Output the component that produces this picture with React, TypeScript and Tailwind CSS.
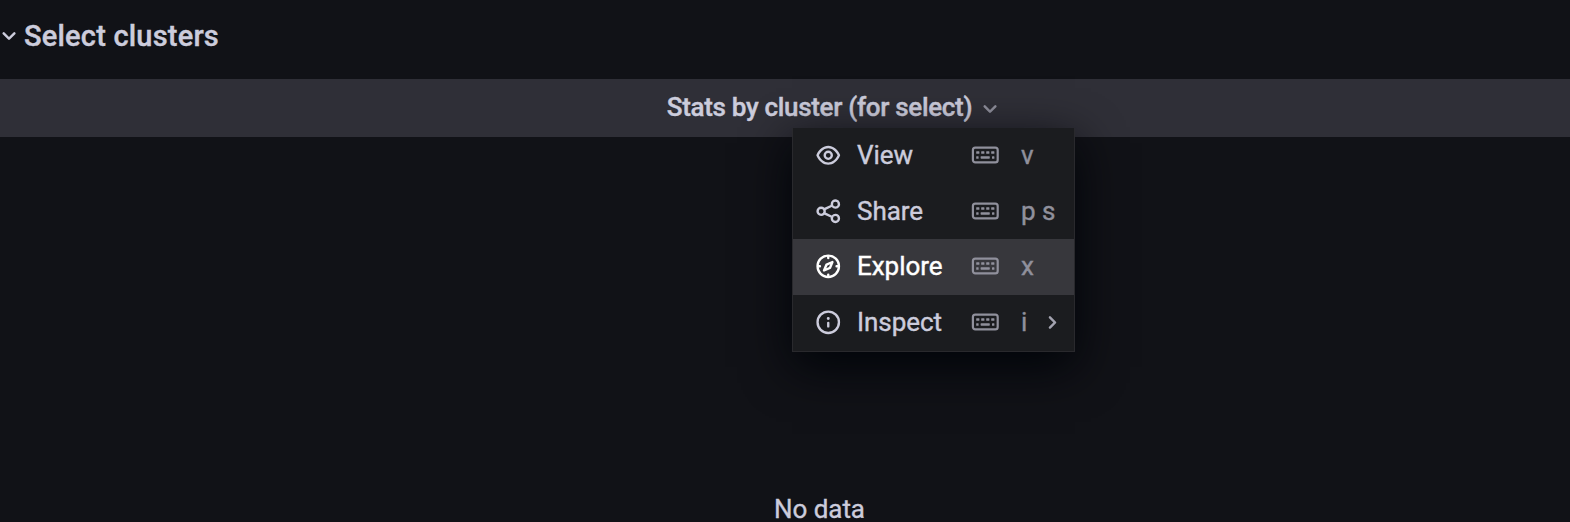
import React from 'react';

const PATHS = {
  angleDown:
    'M17,9.17a1,1,0,0,0-1.41,0L12,12.71,8.46,9.17a1,1,0,0,0-1.41,0,1,1,0,0,0,0,1.42l4.24,4.24a1,1,0,0,0,1.42,0L17,10.59A1,1,0,0,0,17,9.17Z',
  angleRight:
    'M14.83,11.29,10.59,7.05a1,1,0,0,0-1.42,0,1,1,0,0,0,0,1.41L12.71,12,9.17,15.54a1,1,0,0,0,0,1.41,1,1,0,0,0,.71.29,1,1,0,0,0,.71-.29l4.24-4.24A1,1,0,0,0,14.83,11.29Z',
  eye: 'M21.92,11.6C19.9,6.91,16.1,4,12,4S4.1,6.91,2.08,11.6a1,1,0,0,0,0,.8C4.1,17.09,7.9,20,12,20s7.9-2.91,9.92-7.6A1,1,0,0,0,21.92,11.6ZM12,18c-3.17,0-6.17-2.29-7.9-6C5.83,8.29,8.83,6,12,6s6.17,2.29,7.9,6C18.17,15.71,15.17,18,12,18ZM12,8a4,4,0,1,0,4,4A4,4,0,0,0,12,8Zm0,6a2,2,0,1,1,2-2A2,2,0,0,1,12,14Z',
  share:
    'M18,14a4,4,0,0,0-3.08,1.48l-5.1-2.35a3.64,3.64,0,0,0,0-2.26l5.1-2.35A4,4,0,1,0,14,6a4.17,4.17,0,0,0,.07.71L8.79,9.14a4,4,0,1,0,0,5.72l5.28,2.43A4.17,4.17,0,0,0,14,18a4,4,0,1,0,4-4ZM18,4a2,2,0,1,1-2,2A2,2,0,0,1,18,4ZM6,14a2,2,0,1,1,2-2A2,2,0,0,1,6,14Zm12,6a2,2,0,1,1,2-2A2,2,0,0,1,18,20Z',
  compass:
    'M12,2A10,10,0,1,0,22,12,10,10,0,0,0,12,2Zm1,17.93V19a1,1,0,0,0-2,0v.93A8,8,0,0,1,4.07,13H5a1,1,0,0,0,0-2H4.07A8,8,0,0,1,11,4.07V5a1,1,0,0,0,2,0V4.07A8,8,0,0,1,19.93,11H19a1,1,0,0,0,0,2h.93A8,8,0,0,1,13,19.93ZM15.14,7.55l-5,2.12a1,1,0,0,0-.52.52l-2.12,5a1,1,0,0,0,.21,1.1,1,1,0,0,0,.7.3.93.93,0,0,0,.4-.09l5-2.12a1,1,0,0,0,.52-.52l2.12-5a1,1,0,0,0-1.31-1.31Zm-2.49,5.1-2.28,1,1-2.28,2.28-1Z',
  info: 'M12,2A10,10,0,1,0,22,12,10,10,0,0,0,12,2Zm0,18a8,8,0,1,1,8-8A8,8,0,0,1,12,20Zm0-8.5a1,1,0,0,0-1,1v3a1,1,0,0,0,2,0v-3A1,1,0,0,0,12,11.5Zm0-4a1.25,1.25,0,1,0,1.25,1.25A1.25,1.25,0,0,0,12,7.5Z',
};

type IconName = keyof typeof PATHS;

function Icon({ name, className }: { name: IconName; className: string }) {
  return (
    <svg viewBox="0 0 24 24" fill="currentColor" className={className} aria-hidden="true">
      <path d={PATHS[name]} />
    </svg>
  );
}

function Keyboard() {
  return (
    <svg viewBox="0 0 28 18" className="h-[18px] w-7 shrink-0" fill="currentColor" aria-hidden="true">
      <rect x="1.9" y="1.6" width="24.8" height="14.8" rx="2.4" fill="none" stroke="currentColor" strokeWidth="2.2" />
      <rect x="5.2" y="5.3" width="3.2" height="2.4" rx="0.5" />
      <rect x="10.2" y="5.3" width="3.2" height="2.4" rx="0.5" />
      <rect x="15.2" y="5.3" width="3.2" height="2.4" rx="0.5" />
      <rect x="20.2" y="5.3" width="3.2" height="2.4" rx="0.5" />
      <rect x="5.2" y="10.2" width="2.4" height="2.5" rx="0.5" />
      <rect x="9.6" y="10.2" width="9.2" height="2.5" rx="0.6" />
      <rect x="21" y="10.2" width="2.4" height="2.5" rx="0.5" />
    </svg>
  );
}

interface Item {
  icon: IconName;
  label: string;
  keys: string;
  active?: boolean;
  submenu?: boolean;
}

const ITEMS: Item[] = [
  { icon: 'eye', label: 'View', keys: 'v' },
  { icon: 'share', label: 'Share', keys: 'p s' },
  { icon: 'compass', label: 'Explore', keys: 'x', active: true },
  { icon: 'info', label: 'Inspect', keys: 'i', submenu: true },
];

function Menu() {
  return (
    <ul className="absolute top-[49px] left-[792px] z-10 w-[283px] border border-t-0 border-[#29292d] bg-[#1b1c1f] tracking-[-0.05px] shadow-[0_15px_45px_0_#010409] [-webkit-text-stroke:0.4px_currentColor]">
      {ITEMS.map((item) => (
        <li
          key={item.label}
          className={
            item.active
              ? 'flex h-14 items-center bg-[#37373c] pb-0.5 pl-[21px] text-white'
              : 'flex h-[55.5px] items-center pb-px pl-[21px] text-[#ccccdc]'
          }
        >
          <Icon name={item.icon} className="size-[28.5px] shrink-0" />
          <span className="ml-[14.5px] w-[114px] shrink-0">{item.label}</span>
          <span className="flex items-center text-[#90909c]">
            <Keyboard />
            <span className="ml-[22px]">{item.keys}</span>
          </span>
          {item.submenu && <Icon name="angleRight" className="ml-[11px] size-[29px] shrink-0 text-[#a3a3b0]" />}
        </li>
      ))}
    </ul>
  );
}

export default function App() {
  return (
    <main className="flex h-[522px] flex-col overflow-hidden bg-[#111217] font-['Roboto',sans-serif] text-[26px] leading-9 text-[#ccccdc]">
      <header className="flex h-[79px] shrink-0 items-start pt-[18px]">
        <Icon name="angleDown" className="-ml-[6px] size-[30px] shrink-0 translate-y-[3px]" />
        <h1 className="text-[29px] font-medium tracking-[0.2px] [-webkit-text-stroke:0.4px_currentColor]">Select clusters</h1>
      </header>
      <section className="relative flex w-[1639px] grow flex-col">
        <div className="flex h-[58px] shrink-0 items-center justify-center bg-[#2f2f37] pb-0.5">
          <h2 className="font-medium tracking-[-0.32px] [-webkit-text-stroke:0.4px_currentColor]">
            Stats by cluster (for select)
          </h2>
          <Icon name="angleDown" className="-mr-[33px] ml-[3px] size-[30px] shrink-0 translate-y-[2px] text-[#8e8e9b]" />
        </div>
        <Menu />
        <p className="mt-auto -mb-[5px] text-center tracking-[-0.05px] [-webkit-text-stroke:0.35px_currentColor]">No data</p>
      </section>
    </main>
  );
}
